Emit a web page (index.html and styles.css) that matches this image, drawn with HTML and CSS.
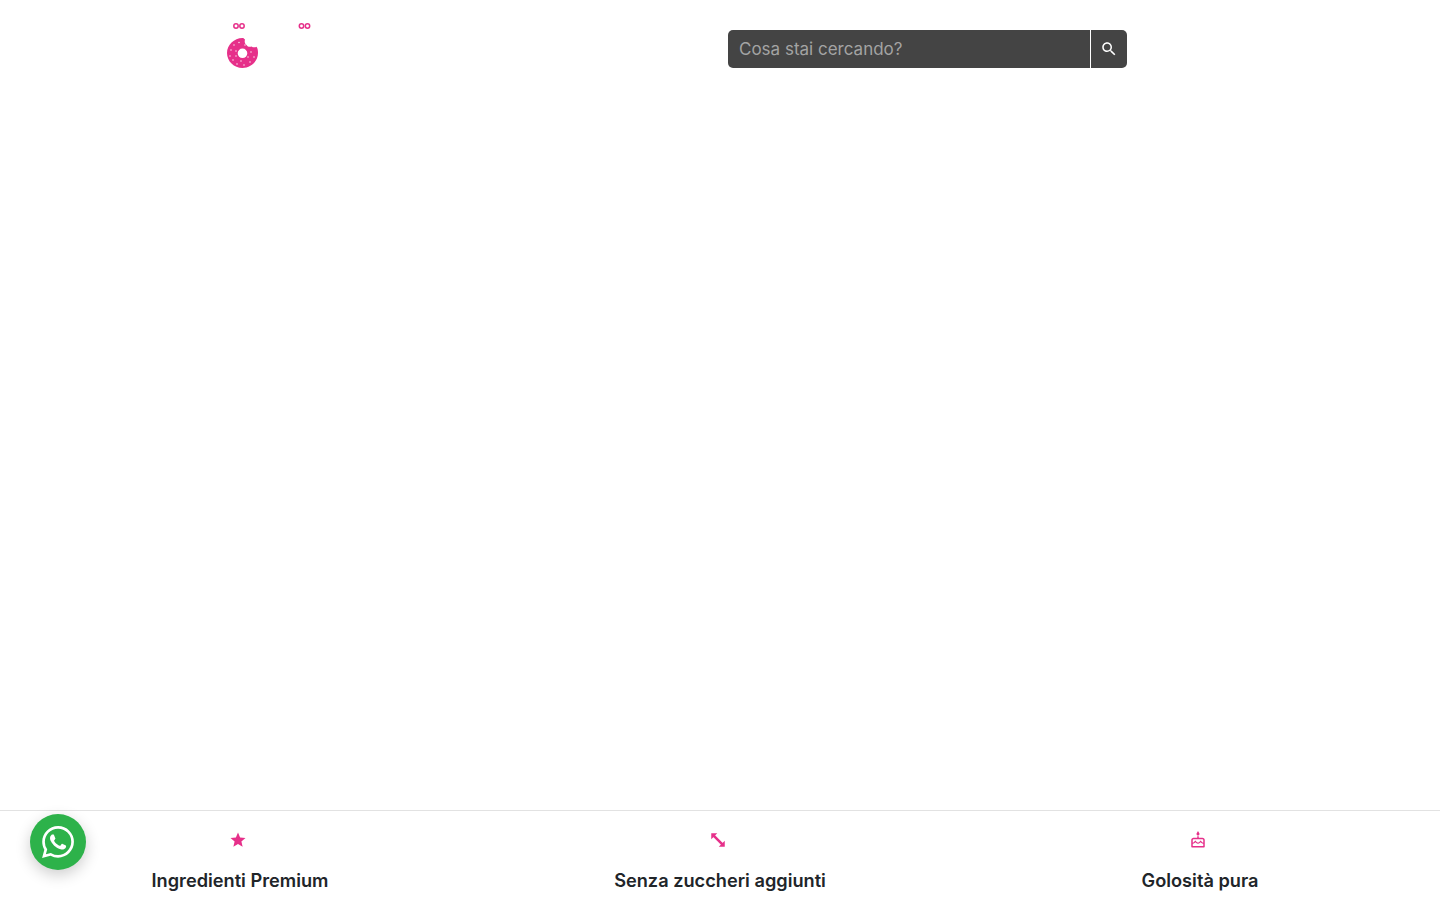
FILE: index.html
```html
<!DOCTYPE html>
<html lang="it">
<head>
  <meta charset="UTF-8">
  <meta name="viewport" content="width=device-width, initial-scale=1">
  <title>Cosa stai cercando?</title>
  <link rel="stylesheet" href="styles.css">
</head>
<body>

<header class="header">
  <a class="logo" href="#">
    <svg width="160" height="60" viewBox="0 0 160 60">
      <g class="logo-dots">
        <circle cx="76" cy="11" r="2.200"/>
        <circle cx="82" cy="11" r="2.200"/>
        <circle cx="141.500" cy="11" r="2.200"/>
        <circle cx="147.500" cy="11" r="2.200"/>
      </g>
      <path class="donut" fill-rule="evenodd" d="M82.500 23c-8.500 0-15.500 7-15.500 15c0 8.300 7 15 15.500 15c8.300 0 15.500-6.700 15.500-15c0-2.700-.3-4.500-1.500-6.300c-1.500 1-3.500.8-5-.3c-1.800.8-4 .2-5-1.500c-1.600-1-2.200-3-1.500-5.300c-.9-1-1.400-1.600-2.500-1.600zM82.500 33.500a4.800 4.800 0 1 1 0 9.600a4.800 4.800 0 1 1 0-9.600z"/>
      <g class="sprinkles">
        <circle cx="74" cy="30" r=".8"/>
        <circle cx="79" cy="27.500" r=".8"/>
        <circle cx="71" cy="35" r=".8"/>
        <circle cx="70" cy="41" r=".8"/>
        <circle cx="73" cy="45" r=".8"/>
        <circle cx="77" cy="49" r=".8"/>
        <circle cx="84" cy="50" r=".8"/>
        <circle cx="90" cy="47" r=".8"/>
        <circle cx="94" cy="42" r=".8"/>
        <circle cx="91" cy="37" r=".8"/>
        <circle cx="76" cy="36" r=".8"/>
        <circle cx="85" cy="30" r=".8"/>
        <circle cx="76" cy="41" r=".8"/>
        <circle cx="81" cy="46" r=".8"/>
        <circle cx="88" cy="42" r=".8"/>
      </g>
    </svg>
  </a>
  <form class="search">
    <input class="search-input" type="text" placeholder="Cosa stai cercando?">
    <button class="search-btn" type="button" aria-label="Cerca">
      <svg width="18" height="18" viewBox="0 0 24 24"><path d="M15.500 14h-.79l-.28-.27C15.410 12.590 16 11.110 16 9.500 16 5.910 13.090 3 9.500 3S3 5.910 3 9.500 5.910 16 9.500 16c1.610 0 3.090-.59 4.230-1.570l.27.28v.79l5 4.990L20.490 19l-4.990-5zm-6 0C7.010 14 5 11.990 5 9.500S7.010 5 9.500 5 14 7.010 14 9.500 11.990 14 9.500 14z"/></svg>
    </button>
  </form>
</header>

<section class="features">
  <div class="feature">
    <svg class="feature-icon" width="18" height="18" viewBox="0 0 24 24"><path d="M12 17.270L18.180 21l-1.640-7.030L22 9.240l-7.190-.61L12 2 9.190 8.630 2 9.240l5.460 4.730L5.820 21z"/></svg>
    <h3>Ingredienti Premium</h3>
  </div>
  <div class="feature">
    <svg class="feature-icon" width="18" height="18" viewBox="0 0 24 24"><path d="M3 3h8L3 11zM21 21h-8L21 13zM5.300 7.700L7.700 5.300L18.700 16.300L16.300 18.700z"/></svg>
    <h3>Senza zuccheri aggiunti</h3>
  </div>
  <div class="feature">
    <svg class="feature-icon" width="18" height="18" viewBox="0 0 24 24"><path d="M12 6c1.110 0 2-.9 2-2 0-.38-.1-.73-.29-1.030L12 0l-1.710 2.970c-.19.3-.29.65-.29 1.030 0 1.100.9 2 2 2zm6 3h-5V7h-2v2H6c-1.660 0-3 1.340-3 3v9c0 .55.45 1 1 1h16c.55 0 1-.45 1-1v-9c0-1.660-1.340-3-3-3zm1 11H5v-3c.9-.01 1.760-.37 2.400-1.010l1.090-1.070 1.070 1.070c1.310 1.310 3.590 1.300 4.890 0l1.080-1.070 1.070 1.070c.64.64 1.500 1 2.400 1.010v3zm0-4.500c-.51-.01-.99-.2-1.350-.57l-2.140-2.130-2.140 2.130c-.74.74-2.030.74-2.770 0L8.480 12.800l-2.140 2.130c-.35.36-.83.56-1.340.57V12c0-.55.45-1 1-1h12c.55 0 1 .45 1 1v3.500z"/></svg>
    <h3>Golosità pura</h3>
  </div>
</section>

<a class="whatsapp" href="#" aria-label="WhatsApp">
  <svg width="32" height="32" viewBox="0 0 24 24"><path d="M17.472 14.382c-.297-.149-1.758-.867-2.030-.967-.273-.099-.471-.148-.67.150-.197.297-.767.966-.94 1.164-.173.199-.347.223-.644.075-.297-.150-1.255-.463-2.390-1.475-.883-.788-1.480-1.761-1.653-2.059-.173-.297-.018-.458.130-.606.134-.133.298-.347.446-.520.149-.174.198-.298.298-.497.099-.198.050-.371-.025-.520-.075-.149-.669-1.612-.916-2.207-.242-.579-.487-.500-.669-.510-.173-.008-.371-.010-.570-.010-.198 0-.520.074-.792.372-.272.297-1.040 1.016-1.040 2.479 0 1.462 1.065 2.875 1.213 3.074.149.198 2.096 3.200 5.077 4.487.709.306 1.262.489 1.694.625.712.227 1.360.195 1.871.118.571-.085 1.758-.719 2.006-1.413.248-.694.248-1.289.173-1.413-.074-.124-.272-.198-.570-.347m-5.421 7.403h-.004a9.870 9.870 0 01-5.031-1.378l-.361-.214-3.741.982.998-3.648-.235-.374a9.860 9.860 0 01-1.510-5.260c.001-5.450 4.436-9.884 9.888-9.884 2.640 0 5.122 1.030 6.988 2.898a9.825 9.825 0 012.893 6.994c-.003 5.450-4.437 9.884-9.885 9.884m8.413-18.297A11.815 11.815 0 0012.050 0C5.495 0 .160 5.335.157 11.892c0 2.096.547 4.142 1.588 5.945L.057 24l6.305-1.654a11.882 11.882 0 005.683 1.448h.005c6.554 0 11.890-5.335 11.893-11.893a11.821 11.821 0 00-3.480-8.413z"/></svg>
</a>

</body>
</html>
```

FILE: styles.css
```css
html, body {
  height: 100%;
}
body {
  margin: 0;
  display: flex;
  flex-direction: column;
  justify-content: space-between;
  overflow: hidden;
  background-color: #fff;
  color: #212529;
  font-family: "Inter", "Open Sans", sans-serif;
}
.header {
  display: flex;
  align-items: flex-start;
  padding: 15px 0 0 160px;
}
.logo {
  display: block;
  width: 160px;
  height: 60px;
}
.logo-dots circle {
  fill: none;
  stroke: #e6308a;
  stroke-width: 1.500;
}
.donut {
  fill: #e6308a;
}
.sprinkles circle {
  fill: #fbd3e6;
}
.search {
  display: flex;
  width: 399px;
  height: 38px;
  margin: 15px 0 0 408px;
}
.search-input {
  flex: 1;
  min-width: 0;
  box-sizing: border-box;
  padding: 0 11px 1px;
  border: none;
  border-radius: 5px 0 0 5px;
  background-color: #444;
  color: #fff;
  font-family: inherit;
  font-size: 17px;
}
.search-input::placeholder {
  color: #a3a3a3;
  opacity: 1;
}
.search-btn {
  display: flex;
  align-items: center;
  justify-content: center;
  width: 37px;
  padding: 0;
  border: none;
  border-left: 1px solid #fff;
  border-radius: 0 5px 5px 0;
  background-color: #444;
  cursor: pointer;
}
.search-btn svg {
  fill: #fff;
}
.features {
  display: grid;
  grid-template-columns: repeat(3, 1fr);
  height: 89px;
  border-top: 1px solid #e2e2e2;
}
.feature {
  display: flex;
  flex-direction: column;
  align-items: center;
  padding-top: 20px;
}
.feature-icon {
  margin-right: 4px;
  fill: #e6308a;
}
.feature h3 {
  margin: 19px 0 0;
  font-size: 18.200px;
  font-weight: 600;
  line-height: 24px;
}
.whatsapp {
  position: fixed;
  left: 30px;
  bottom: 30px;
  display: flex;
  align-items: center;
  justify-content: center;
  width: 56px;
  height: 56px;
  border-radius: 50%;
  background-color: #2db24a;
  box-shadow: 0 5px 15px rgba(0,0,0,0.2);
}
.whatsapp svg {
  fill: #fff;
}
```
